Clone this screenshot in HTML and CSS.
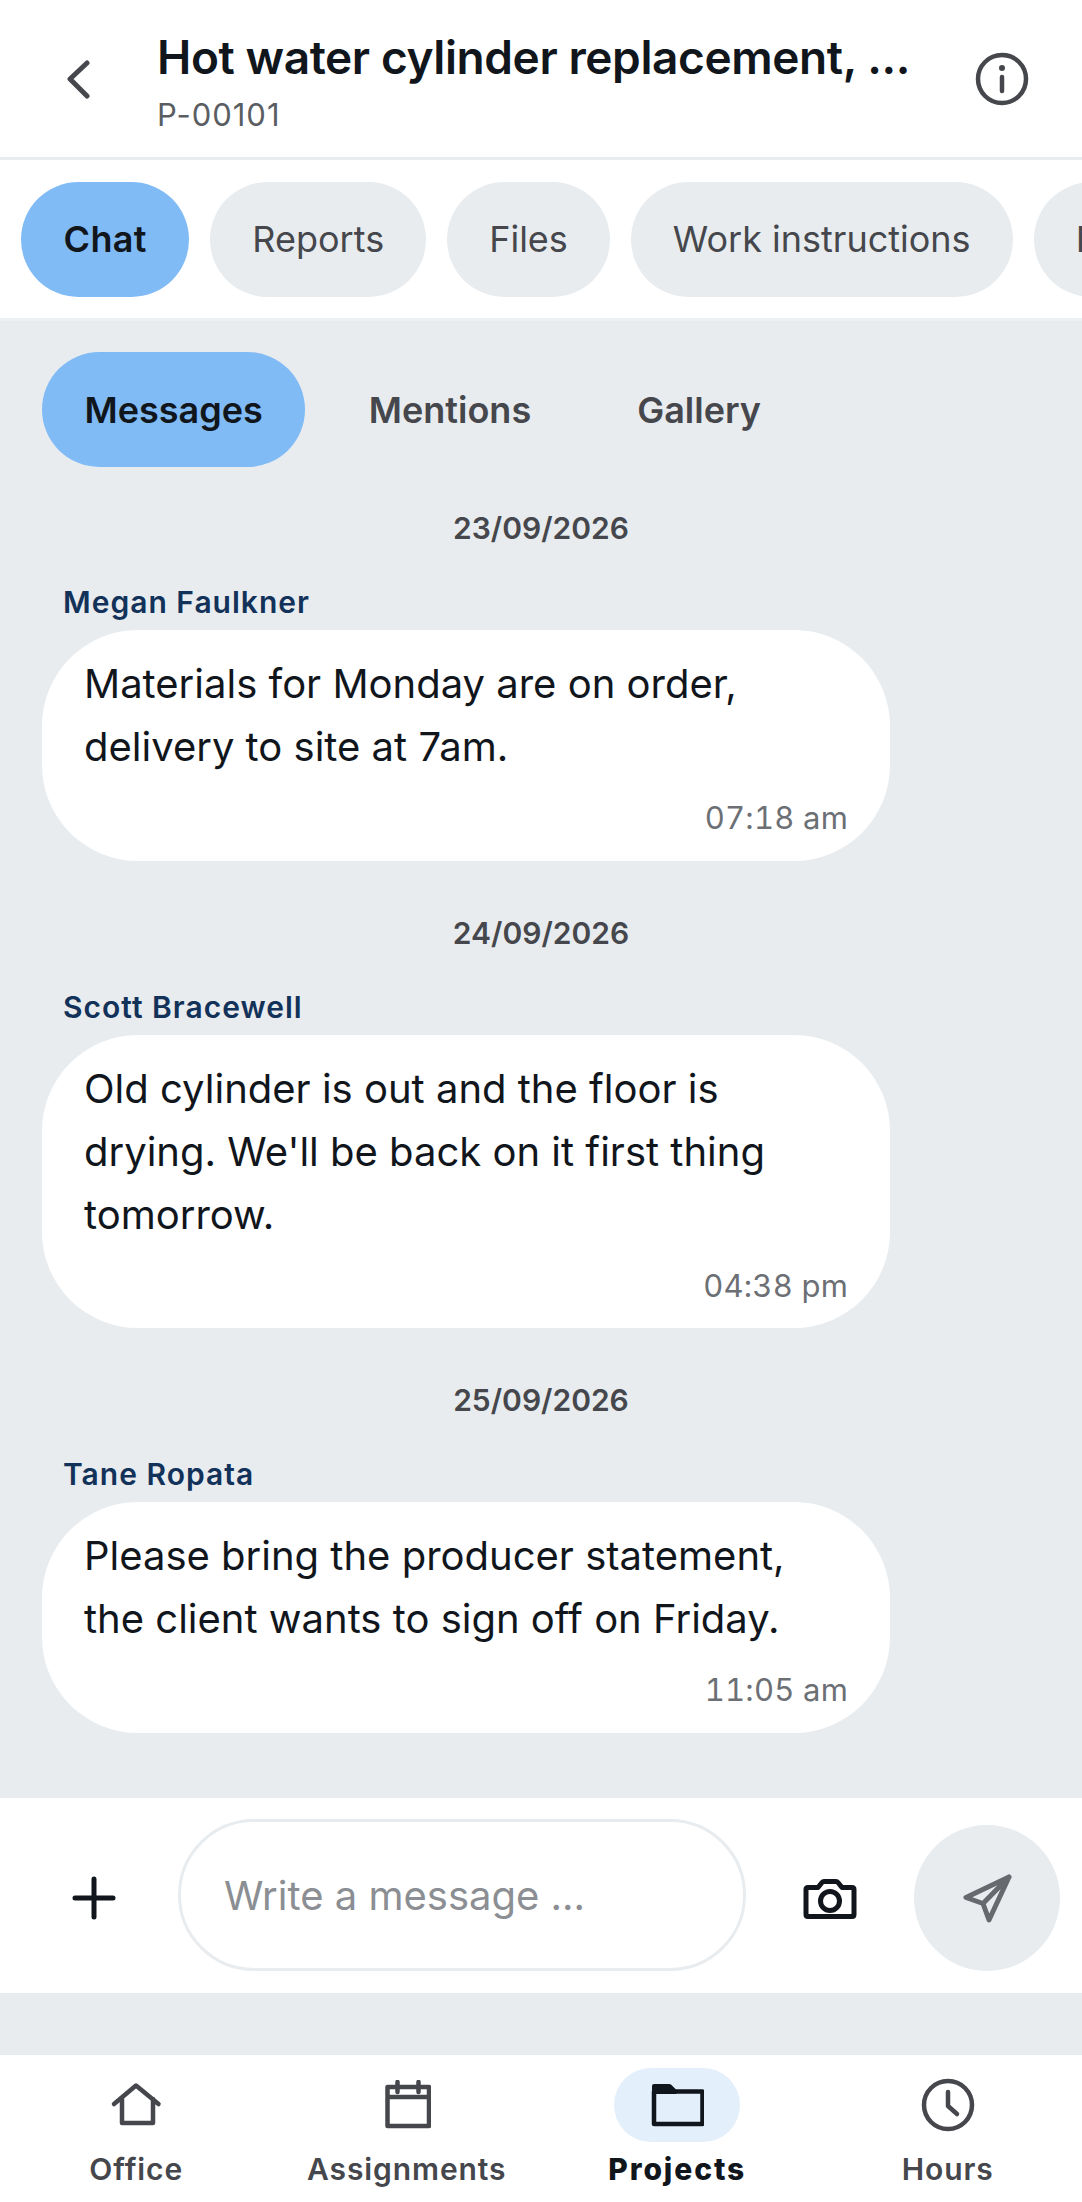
FILE: index.html
```html
<!DOCTYPE html>
<html lang="en">
<head>
<meta charset="utf-8">
<title>Project chat</title>
<link rel="stylesheet" href="styles.css">
</head>
<body>
<div class="app">
  <header class="top">
    <svg class="back" width="26" height="40" viewBox="0 0 26 40"><path d="M21 4 4 20l17 17" /></svg>
    <div class="heading">
      <div class="title">Hot water cylinder replacement, ...</div>
      <div class="code">P-00101</div>
    </div>
    <svg class="info" width="54" height="54" viewBox="0 0 54 54"><circle cx="27" cy="27" r="24"/><line x1="27" y1="25" x2="27" y2="39"/><circle class="dot" cx="27" cy="16" r="3"/></svg>
  </header>
  <nav class="tabs">
    <span class="tab active">Chat</span>
    <span class="tab">Reports</span>
    <span class="tab">Files</span>
    <span class="tab">Work instructions</span>
    <span class="tab">Notes</span>
  </nav>
  <main class="chat">
    <div class="subtabs">
      <span class="sub active">Messages</span>
      <span class="sub">Mentions</span>
      <span class="sub">Gallery</span>
    </div>
    <div class="date">23/09/2026</div>
    <div class="sender">Megan Faulkner</div>
    <div class="bubble">
      <p>Materials for Monday are on order, delivery to site at 7am.</p>
      <div class="time">07:18 am</div>
    </div>
    <div class="date">24/09/2026</div>
    <div class="sender">Scott Bracewell</div>
    <div class="bubble">
      <p>Old cylinder is out and the floor is drying. We'll be back on it first thing tomorrow.</p>
      <div class="time">04:38 pm</div>
    </div>
    <div class="date">25/09/2026</div>
    <div class="sender">Tane Ropata</div>
    <div class="bubble">
      <p>Please bring the producer statement, the client wants to sign off on Friday.</p>
      <div class="time">11:05 am</div>
    </div>
  </main>
  <section class="composer">
    <svg class="plus" width="44" height="44" viewBox="0 0 44 44"><path d="M22 3v38M3 22h38"/></svg>
    <div class="input">Write a message ...</div>
    <svg class="camera" width="54" height="42" viewBox="0 0 54 42"><path d="M5 9.5h10l4-5q.8-1 2-1h12q1.2 0 2 1l4 5h10q2 0 2 2v25q0 2-2 2H5q-2 0-2-2v-25q0-2 2-2Z"/><circle cx="27" cy="23" r="9.5"/></svg>
    <div class="send">
      <svg width="50" height="50" viewBox="0 0 50 50"><path d="M47 4 4 24.5l17 6 6 16.5Z M47 4 21 30.5"/></svg>
    </div>
  </section>
  <div class="spacer"></div>
  <footer class="bottom">
    <div class="item">
      <span class="icon"><svg width="54" height="46" viewBox="0 0 54 46"><path d="M5 22 27 3.5 49.5 22M13 17v24h31V17"/></svg></span>
      <span class="label">Office</span>
    </div>
    <div class="item">
      <span class="icon"><svg width="48" height="50" viewBox="0 0 48 50"><path d="M4.5 7h41.5v39H4.5ZM4.5 17h41.5M14.5 2v10M35.5 2v10"/></svg></span>
      <span class="label">Assignments</span>
    </div>
    <div class="item current">
      <span class="icon"><svg width="54" height="44" viewBox="0 0 54 44"><path class="fill" d="M2 3q0-2 2-2h15q1.5 0 2.5 1l5 5v4H2Z"/><path d="M4 8.5h48.5V41H4Z"/></svg></span>
      <span class="label">Projects</span>
    </div>
    <div class="item">
      <span class="icon"><svg width="54" height="54" viewBox="0 0 54 54"><circle cx="27" cy="27" r="24"/><path d="M27 14v14l9 8"/></svg></span>
      <span class="label">Hours</span>
    </div>
  </footer>
</div>
</body>
</html>
```

FILE: styles.css
```css
* { box-sizing: border-box; }
html, body { margin: 0; padding: 0; background: #fff; }
body { font-family: Inter, "Liberation Sans", sans-serif; color: #11161c; }
.app { width: 1082px; height: 2202px; display: flex; flex-direction: column; overflow: hidden; }
svg { display: block; fill: none; stroke-linecap: round; stroke-linejoin: round; }

.top { height: 160px; flex: none; display: flex; align-items: center; padding: 0 0 0 66px; border-bottom: 3px solid #e8ecef; background: #fff; }
.back { flex: none; }
.back path { stroke: #45474c; stroke-width: 5; }
.heading { width: 780px; margin-left: 65px; padding-top: 6px; }
.title { font-size: 46px; line-height: 58px; font-weight: 600; letter-spacing: -0.4px; white-space: nowrap; color: #11161c; }
.code { font-size: 31px; line-height: 42px; margin-top: 8px; letter-spacing: 1px; color: #5a5e63; }
.info { flex: none; margin-left: 38px; }
.info circle, .info line { stroke: #45474c; stroke-width: 4.5; }
.info .dot { fill: #45474c; stroke: none; }

.tabs { height: 161px; flex: none; display: flex; align-items: center; gap: 21px; padding: 0 0 0 21px; border-bottom: 3px solid #edf0f2; background: #fff; overflow: hidden; }
.tab { flex: none; height: 115px; display: flex; align-items: center; padding: 0 42px; border-radius: 58px; background: #e8ecef; font-size: 36px; color: #45474c; }
.tab.active { background: #80bbf6; padding: 0 42.5px; font-weight: 600; letter-spacing: 0.35px; color: #11161c; }

.chat { flex: 1; background: #e8ecef; padding: 31px 42px 0; display: flex; flex-direction: column; }
.subtabs { display: flex; gap: 21px; height: 115px; margin-bottom: 41px; }
.sub { height: 115px; display: flex; align-items: center; padding: 0 42.5px; border-radius: 58px; font-size: 36px; font-weight: 600; color: #45474c; }
.sub.active { background: #80bbf6; color: #11161c; }
.date { text-align: center; font-size: 30px; line-height: 40px; font-weight: 600; color: #45474c; }
.sender { margin: 34px 0 0 21px; font-size: 30px; line-height: 40px; height: 48px; font-weight: 600; letter-spacing: 1px; color: #12325a; }
.bubble { width: 848px; background: #fff; border-radius: 96px; padding: 22px 42px 22.5px; margin-bottom: 52px; }
.bubble p { margin: 0; font-size: 40px; line-height: 63px; color: #11161c; width: 740px; }
.time { text-align: right; font-size: 31px; line-height: 40px; letter-spacing: 0.2px; font-variant-numeric: tabular-nums; color: #6c7075; margin-top: 20px; }

.composer { height: 195px; flex: none; background: #fff; display: flex; align-items: center; padding: 0 22px 0 72px; }
.plus { flex: none; margin-top: 5px; }
.plus path { stroke: #11161c; stroke-width: 5; }
.input { width: 568px; height: 152px; margin-left: 62px; margin-top: -1px; border: 3px solid #e8ecef; border-radius: 76px; display: flex; align-items: center; padding-left: 43px; font-size: 40px; color: #8b8e92; flex: none; }
.camera { flex: none; margin-left: 57px; margin-top: 7px; }
.camera path, .camera circle { stroke: #11161c; stroke-width: 5; }
.send { width: 146px; height: 146px; margin-left: 57px; margin-top: 4px; border-radius: 50%; background: #e8ecef; display: flex; align-items: center; justify-content: center; flex: none; }
.send path { stroke: #66696d; stroke-width: 5; }

.spacer { height: 62px; flex: none; background: #e8ecef; }
.bottom { height: 147px; flex: none; display: grid; grid-template-columns: repeat(4, 270.5px); padding-left: 1px; background: #fff; }
.item { display: flex; flex-direction: column; align-items: center; padding-top: 13px; }
.icon { width: 126px; height: 74px; display: flex; align-items: center; justify-content: center; border-radius: 37px; }
.icon path, .icon circle { stroke: #45474c; stroke-width: 4.5; }
.label { margin-top: 7px; font-size: 30px; line-height: 40px; font-weight: 600; letter-spacing: 0.9px; color: #45474c; }
.current .icon { background: #e3effb; }
.current .icon path { stroke: #11161c; }
.current .icon .fill { fill: #11161c; stroke: none; }
.current .label { font-weight: 800; letter-spacing: 1.9px; color: #11161c; }
```
